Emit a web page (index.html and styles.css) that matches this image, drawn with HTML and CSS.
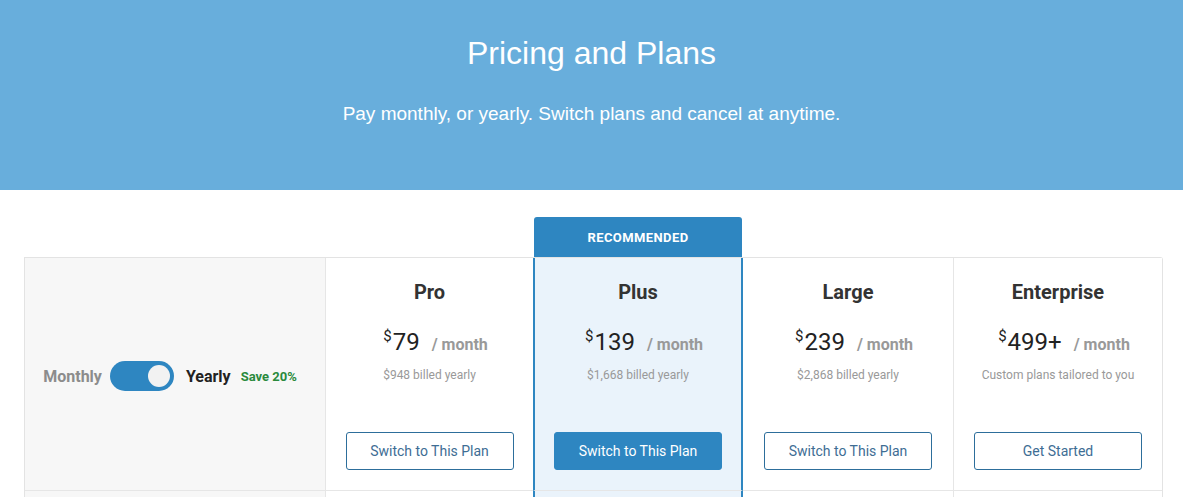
FILE: index.html
```html
<!DOCTYPE html>
<html lang="en">
<head>
<meta charset="utf-8">
<title>Pricing and Plans</title>
<link rel="stylesheet" href="styles.css">
</head>
<body>
<header class="hero">
  <h1 class="hero-title">Pricing and Plans</h1>
  <p class="hero-sub">Pay monthly, or yearly. Switch plans and cancel at anytime.</p>
</header>
<main class="pricing">
  <div class="badge-row">
    <div class="badge">RECOMMENDED</div>
  </div>
  <div class="table">
    <div class="cell toggle-cell">
      <span class="t-monthly">Monthly</span>
      <span class="switch"><span class="knob"></span></span>
      <span class="t-yearly">Yearly</span>
      <span class="t-save">Save 20%</span>
    </div>
    <div class="cell plan">
      <h2 class="plan-name">Pro</h2>
      <div class="price"><sup class="cur">$</sup><span class="amt">79</span><span class="per">/ month</span></div>
      <div class="billed">$948 billed yearly</div>
      <button class="btn">Switch to This Plan</button>
    </div>
    <div class="cell plan featured">
      <h2 class="plan-name">Plus</h2>
      <div class="price"><sup class="cur">$</sup><span class="amt">139</span><span class="per">/ month</span></div>
      <div class="billed">$1,668 billed yearly</div>
      <button class="btn btn-solid">Switch to This Plan</button>
    </div>
    <div class="cell plan">
      <h2 class="plan-name">Large</h2>
      <div class="price"><sup class="cur">$</sup><span class="amt">239</span><span class="per">/ month</span></div>
      <div class="billed">$2,868 billed yearly</div>
      <button class="btn">Switch to This Plan</button>
    </div>
    <div class="cell plan last">
      <h2 class="plan-name">Enterprise</h2>
      <div class="price"><sup class="cur">$</sup><span class="amt">499+</span><span class="per">/ month</span></div>
      <div class="billed">Custom plans tailored to you</div>
      <button class="btn">Get Started</button>
    </div>

    <div class="cell row2 first-col"></div>
    <div class="cell row2"></div>
    <div class="cell row2 featured"></div>
    <div class="cell row2"></div>
    <div class="cell row2 last"></div>
  </div>
</main>
</body>
</html>
```
FILE: styles.css
```css
* { box-sizing: border-box; }
html, body { margin: 0; padding: 0; }
body {
  font-family: Roboto, "Liberation Sans", Arial, sans-serif;
  background: #ffffff;
  color: #333;
  overflow: hidden;
}

.hero {
  height: 190px;
  background: #68aedc;
  color: #fff;
  text-align: center;
  font-family: "Liberation Sans", Arial, sans-serif;
  padding-top: 34px;
}
.hero-title {
  margin: 0;
  font-size: 32px;
  font-weight: 400;
  line-height: 38px;
}
.hero-sub {
  margin: 31px 0 0;
  font-size: 19px;
  line-height: 22px;
}

.pricing {
  padding: 27px 20px 0 24px;
}

.badge-row {
  display: grid;
  grid-template-columns: 301px 209px 208px 211px 1fr;
  height: 40px;
}
.badge {
  grid-column: 3;
  background: #2e86c1;
  color: #fff;
  font-size: 13px;
  font-weight: 700;
  letter-spacing: 0.4px;
  display: flex;
  align-items: center;
  justify-content: center;
  border-radius: 3px 3px 0 0;
}

.table {
  display: grid;
  grid-template-columns: 301px 208px 209px 211px 1fr;
  grid-template-rows: 233px 40px;
  border-top: 1px solid #e3e3e3;
  border-left: 1px solid #e3e3e3;
  border-right: 1px solid #e3e3e3;
  border-radius: 0 3px 0 0;
}
.cell {
  border-right: 1px solid #e6e6e6;
  border-bottom: 1px solid #e6e6e6;
}
.cell.last { border-right: none; }

.toggle-cell {
  background: #f7f7f7;
  display: flex;
  align-items: center;
  justify-content: center;
  padding-right: 10px;
  padding-top: 4px;
}
.t-monthly {
  font-size: 16px;
  font-weight: 700;
  color: #8c8c8c;
}
.switch {
  width: 64px;
  height: 30px;
  border-radius: 15px;
  background: #2e86c1;
  margin: 0 12px 0 8px;
  display: flex;
  align-items: center;
  justify-content: flex-end;
  padding-right: 4px;
}
.knob {
  width: 22px;
  height: 22px;
  border-radius: 50%;
  background: #f2f2f2;
}
.t-yearly {
  font-size: 16px;
  font-weight: 700;
  color: #222;
}
.t-save {
  font-size: 13px;
  font-weight: 700;
  color: #2a8a3c;
  margin-left: 10px;
  margin-top: 1px;
}

.plan {
  display: flex;
  flex-direction: column;
  align-items: center;
  padding-top: 22px;
  background: #fff;
}
.featured {
  background: #eaf3fb;
  border-left: 2px solid #2e86c1;
  border-right: 2px solid #2e86c1;
  margin-left: -1px;
}
.plan-name {
  margin: 0;
  font-size: 20px;
  font-weight: 700;
  color: #333;
  line-height: 24px;
}
.price {
  margin-top: 23px;
  padding-left: 12px;
  display: flex;
  align-items: baseline;
  color: #222;
  line-height: 30px;
  height: 30px;
}
.cur {
  font-size: 15px;
  vertical-align: baseline;
  position: relative;
  top: -9px;
  margin-right: 1px;
}
.amt {
  font-size: 24px;
  font-weight: 400;
}
.per {
  font-size: 16px;
  font-weight: 700;
  color: #999;
  margin-left: 12px;
}
.billed {
  margin-top: 10px;
  font-size: 12px;
  color: #999;
  line-height: 16px;
}
.btn {
  margin-top: auto;
  margin-bottom: 20px;
  width: 168px;
  height: 38px;
  border: 1px solid #2d6e9b;
  border-radius: 3px;
  background: #fff;
  color: #3e6d94;
  font-family: Roboto, "Liberation Sans", Arial, sans-serif;
  font-size: 14px;
  cursor: pointer;
}
.btn-solid {
  background: #2e86c1;
  border-color: #2e86c1;
  color: #fff;
}
.row2.first-col { background: #f7f7f7; }
.row2 { background: #fff; }
.row2.featured { background: #eaf3fb; }
```
